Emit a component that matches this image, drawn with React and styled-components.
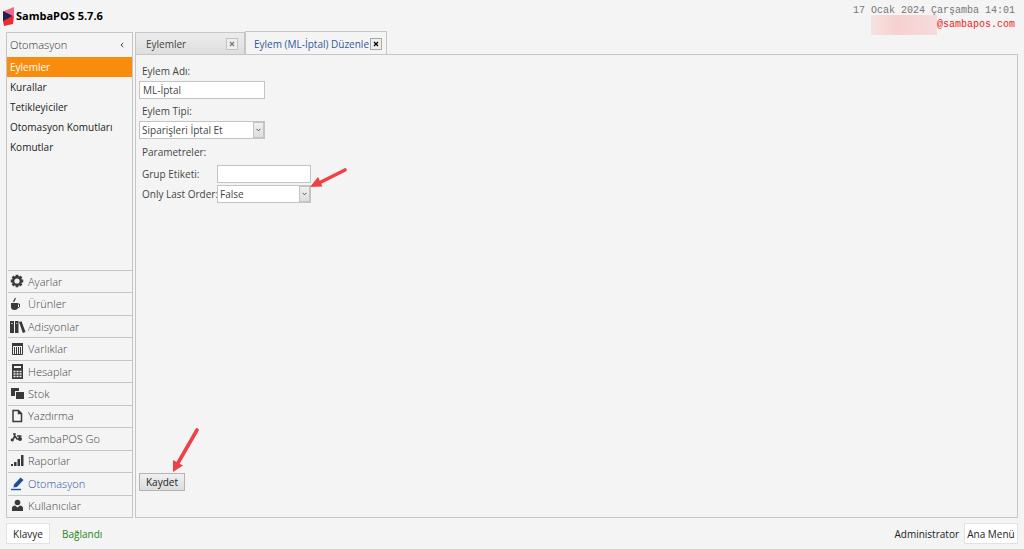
import { useState } from "react";
import styled, { createGlobalStyle } from "styled-components";

const GlobalStyle = createGlobalStyle`
  * {
    box-sizing: border-box;
  }

  body {
    margin: 0;
    background: #f4f4f4;
    color: #222;
    font-family: "Open Sans", "Noto Sans", sans-serif;
    font-size: 10px;
    line-height: 14px;
  }

  button, input, select {
    font: inherit;
    color: inherit;
  }
`;

const Page = styled.div`
  display: flex;
  flex-direction: column;
  min-height: 100vh;
  padding: 0 6px;
`;

const Header = styled.header`
  display: flex;
  justify-content: space-between;
  height: 32px;
`;

const Brand = styled.h1`
  display: flex;
  align-items: center;
  gap: 2px;
  margin: 0 0 0 -3px;
  font-size: 11px;
  font-weight: 700;
  color: #000;
`;

const Status = styled.div`
  display: flex;
  flex-direction: column;
  align-items: flex-end;
  padding: 4px 3px 0 0;
  font-family: "Liberation Mono", monospace;
  font-size: 10px;
  color: #777;
`;

const Account = styled.div`
  display: flex;
  color: #f02020;
`;

const HiddenName = styled.span`
  width: 66px;
  height: 20px;
  margin-top: -3px;
  background: linear-gradient(90deg, #f6e2e2, #f7d0d0 40%, #f6dcdc);
`;

const Main = styled.div`
  display: flex;
  flex: 1;
  gap: 2px;
`;

const Sidebar = styled.aside`
  display: flex;
  flex-direction: column;
  width: 127px;
  border: 1px solid #c6c6c6;
`;

const SidebarTitle = styled.div`
  display: flex;
  align-items: center;
  justify-content: space-between;
  height: 24px;
  padding: 0 8px 0 3px;
  font-size: 11px;
  font-weight: 300;
  color: #333;
`;

const CollapseButton = styled.button`
  display: flex;
  padding: 0;
  border: none;
  background: none;
  cursor: pointer;
`;

const Menu = styled.nav`
  display: flex;
  flex-direction: column;
`;

const MenuItem = styled.button`
  height: 20px;
  padding: 0 3px;
  border: none;
  background: ${(props) => (props.$active ? "#f88c0c" : "transparent")};
  color: ${(props) => (props.$active ? "#fff" : "#222")};
  text-align: left;
  cursor: pointer;
`;

const Modules = styled.nav`
  display: flex;
  flex-direction: column;
  height: 247px;
  margin-top: auto;
  padding-left: 1px;
`;

const Module = styled.button`
  display: flex;
  flex: 1;
  align-items: center;
  gap: 4px;
  padding: 0 2px;
  border: none;
  border-top: 1px solid #c6c6c6;
  background: none;
  font-size: 11px;
  font-weight: 300;
  color: ${(props) => (props.$active ? "#2c50a8" : "#444")};
  text-align: left;
  cursor: pointer;

  svg {
    width: 14px;
    height: 16px;
    overflow: visible;
    color: ${(props) => (props.$active ? "#1f4f9c" : "#3a3a3a")};
  }
`;

const Workspace = styled.main`
  display: flex;
  flex: 1;
  flex-direction: column;
`;

const Tabs = styled.div`
  display: flex;
  align-items: flex-end;
  height: 23px;
  margin-top: -1px;
`;

const Tab = styled.div`
  display: flex;
  align-items: center;
  justify-content: space-between;
  width: ${(props) => (props.$active ? "142px" : "110px")};
  height: ${(props) => (props.$active ? "24px" : "22px")};
  margin-bottom: ${(props) => (props.$active ? "-1px" : "0")};
  padding: ${(props) => (props.$active ? "0 4px 0 8px" : "0 6px 0 10px")};
  border: 1px solid #c6c6c6;
  border-bottom: none;
  background: ${(props) =>
    props.$active ? "#f4f4f4" : "linear-gradient(#ececec, #dedede)"};
  color: ${(props) => (props.$active ? "#31589c" : "#444")};
`;

const TabLabel = styled.button`
  padding: 0;
  border: none;
  background: none;
  white-space: nowrap;
  cursor: pointer;
`;

const TabClose = styled.button`
  display: flex;
  flex-shrink: 0;
  align-items: center;
  justify-content: center;
  width: 12px;
  height: 12px;
  padding: 0;
  border: 1px solid ${(props) => (props.$active ? "#aaa" : "#c4c4c4")};
  background: #eee;
  color: ${(props) => (props.$active ? "#000" : "#777")};
  cursor: pointer;
`;

const Panel = styled.form`
  display: flex;
  flex: 1;
  flex-direction: column;
  align-items: flex-start;
  padding: 6px 3px 26px;
  border: 1px solid #c6c6c6;
  color: #444;
`;

const Label = styled.label`
  height: 20px;
  padding: 0 3px;
  line-height: 20px;
  white-space: nowrap;
`;

const Caption = styled.div`
  height: 20px;
  margin-top: 1px;
  padding: 0 3px;
  line-height: 20px;
`;

const TextBox = styled.input`
  width: ${(props) => (props.$narrow ? "94px" : "126px")};
  height: 18px;
  padding: 0 3px;
  border: 1px solid #c4c4c4;
  background: #fff;
  outline: none;
`;

const Field = styled.div`
  display: flex;
  flex-direction: column;
  margin-bottom: 2px;
`;

const SelectBox = styled.div`
  position: relative;
  width: ${(props) => (props.$narrow ? "94px" : "126px")};
  height: 18px;
`;

const Select = styled.select`
  width: 100%;
  height: 100%;
  padding: 0 14px 0 2px;
  border: 1px solid #c4c4c4;
  border-radius: 0;
  background: #fff;
  appearance: none;
  outline: none;
`;

const SelectArrow = styled.span`
  position: absolute;
  top: 1px;
  right: 1px;
  bottom: 1px;
  display: flex;
  align-items: center;
  justify-content: center;
  width: 11px;
  border: 1px solid #c4c4c4;
  background: linear-gradient(#f0f0f0, #dedede);
  pointer-events: none;
`;

const Parameters = styled.div`
  display: grid;
  grid-template-columns: 78px auto;
  align-items: center;
  margin-top: 2px;
`;

const SaveArea = styled.div`
  position: relative;
  margin-top: auto;
`;

const SaveButton = styled.button`
  width: 46px;
  height: 18px;
  padding: 0;
  border: 1px solid #b4b4b4;
  background: linear-gradient(#f0f0f0, #dcdcdc);
  color: #222;
  cursor: pointer;
`;

const Pointer = styled.svg`
  position: absolute;
  left: ${(props) => props.$left};
  bottom: ${(props) => props.$bottom};
  color: #ee4145;
  pointer-events: none;
`;

const Footer = styled.footer`
  display: flex;
  align-items: center;
  height: 31px;
`;

const FooterButton = styled.button`
  height: 21px;
  padding: 0;
  width: ${(props) => (props.$wide ? "54px" : "44px")};
  border: 1px solid #e2e2e2;
  background: #fff;
  cursor: pointer;
`;

const Connection = styled.span`
  margin-left: 12px;
  color: #1b871b;
`;

const User = styled.span`
  margin: 0 5px 0 auto;
`;

const Logo = () => (
  <svg width="11" height="19" viewBox="0 0 11 19">
    <path d="M1 4L11 0v9L0 7z" fill="#ee6a8c" />
    <path d="M0 4l10 5L0 15z" fill="#25204f" />
    <path d="M0 14L11 8.5l-1 8.500L1 19z" fill="#ee2b31" />
  </svg>
);

const Chevron = () => (
  <svg width="5" height="4" viewBox="0 0 5 4">
    <path d="M.5 .8l2 2 2-2" fill="none" stroke="#555" />
  </svg>
);

const Cross = () => (
  <svg width="6" height="6" viewBox="0 0 6 6">
    <path d="M1 1l4 4M5 1L1 5" stroke="currentColor" strokeWidth="1.3" />
  </svg>
);

const icons = {
  gear: (
    <>
      <circle cx="7" cy="7" r="3.8" fill="none" stroke="currentColor" strokeWidth="2.4" />
      <path
        d="M7 .8v2M7 11.2v2M.8 7h2M11.2 7h2M2.6 2.6L4 4M10 10l1.4 1.4M2.6 11.4L4 10M10 4l1.4-1.4"
        stroke="currentColor"
        strokeWidth="2.8"
      />
    </>
  ),
  cup: (
    <>
      <path d="M1 7h7v4q0 3-3.5 3T1 11z" fill="currentColor" />
      <path d="M8 8h1.5v3L7.5 12" fill="none" stroke="currentColor" />
      <path d="M4 6c-1-2 2-2 1-4" fill="none" stroke="currentColor" strokeWidth="1.2" />
    </>
  ),
  books: (
    <>
      <path d="M0 2h4v12H0zM5 2h3.5v12H5zM9 3l2.5-.8L15.5 13l-2.7 1z" fill="currentColor" />
      <path d="M1 4.5h2M6 4.5h1.5" stroke="#aaa" />
    </>
  ),
  table: (
    <>
      <path d="M2 2h11v3H2z" fill="currentColor" />
      <path
        d="M2.5 5v8.5h10V5M4.5 6v7M6.5 6v7M8.5 6v7M10.5 6v7"
        fill="none"
        stroke="currentColor"
      />
    </>
  ),
  calculator: (
    <>
      <path d="M2 0h11v15H2z" fill="currentColor" />
      <path d="M4 2h7v2H4z" fill="#f4f4f4" />
      <path
        d="M3.500 7.500h2M6.500 7.500h2M9.500 7.500h2M3.500 10h2M6.500 10h2M9.500 10h2M3.500 12.500h2M6.500 12.500h2M9.500 12.500h2"
        stroke="#f4f4f4"
        strokeWidth="1.4"
      />
    </>
  ),
  stock: (
    <path d="M1 2h8v3H5v5H1zM6 6h8v7H6z" fill="currentColor" />
  ),
  page: (
    <path
      d="M3 2.5h5.5l3 3v8H3zM8.5 2.5v3h3"
      fill="none"
      stroke="currentColor"
      strokeWidth="1.5"
    />
  ),
  scooter: (
    <>
      <path
        d="M3 3h2L3.500 8M5 5l2 3h2l1-3M7 5h4.500"
        fill="none"
        stroke="currentColor"
        strokeWidth="1.4"
      />
      <circle cx="2.3" cy="8.8" r="1.6" fill="currentColor" />
      <circle cx="10" cy="8" r="2" fill="currentColor" />
    </>
  ),
  bars: (
    <path d="M1 11h2v2H1zM4 9h2.5v4H4zM7.5 6H10v7H7.5zM11 2h2.5v11H11z" fill="currentColor" />
  ),
  pen: (
    <>
      <path d="M10.5 1.500l3 2.500L7 11l-3.500.5L4 8.500z" fill="currentColor" />
      <path d="M1 13.5h10" stroke="currentColor" strokeWidth="1.4" />
    </>
  ),
  user: (
    <>
      <circle cx="7.500" cy="4.500" r="2.8" fill="currentColor" />
      <path d="M2 13v-3q0-2 3-2.500l2.500 2L10 7.500q3 .5 3 2.5v3z" fill="currentColor" />
    </>
  ),
};

const menuItems = [
  "Eylemler",
  "Kurallar",
  "Tetikleyiciler",
  "Otomasyon Komutları",
  "Komutlar",
];

const modules = [
  { name: "Ayarlar", icon: "gear" },
  { name: "Ürünler", icon: "cup" },
  { name: "Adisyonlar", icon: "books" },
  { name: "Varlıklar", icon: "table" },
  { name: "Hesaplar", icon: "calculator" },
  { name: "Stok", icon: "stock" },
  { name: "Yazdırma", icon: "page" },
  { name: "SambaPOS Go", icon: "scooter" },
  { name: "Raporlar", icon: "bars" },
  { name: "Otomasyon", icon: "pen" },
  { name: "Kullanıcılar", icon: "user" },
];

const App = () => {
  const [menu, setMenu] = useState("Eylemler");
  const [module, setModule] = useState("Otomasyon");
  const [name, setName] = useState("ML-İptal");
  const [tag, setTag] = useState("");

  return (
    <>
      <GlobalStyle />
      <Page>
        <Header>
          <Brand>
            <Logo /> SambaPOS 5.7.6
          </Brand>
          <Status>
            <span>17 Ocak 2024 Çarşamba 14:01</span>
            <Account>
              <HiddenName />
              @sambapos.com
            </Account>
          </Status>
        </Header>

        <Main>
          <Sidebar>
            <SidebarTitle>
              Otomasyon
              <CollapseButton type="button" aria-label="Daralt">
                <svg width="4" height="6" viewBox="0 0 4 6">
                  <path d="M3.3 .8L1 3l2.3 2.2" fill="none" stroke="#444" />
                </svg>
              </CollapseButton>
            </SidebarTitle>
            <Menu>
              {menuItems.map((item) => (
                <MenuItem
                  key={item}
                  type="button"
                  $active={item === menu}
                  onClick={() => setMenu(item)}
                >
                  {item}
                </MenuItem>
              ))}
            </Menu>
            <Modules>
              {modules.map((item) => (
                <Module
                  key={item.name}
                  type="button"
                  $active={item.name === module}
                  onClick={() => setModule(item.name)}
                >
                  <svg viewBox="0 0 14 16">{icons[item.icon]}</svg>
                  {item.name}
                </Module>
              ))}
            </Modules>
          </Sidebar>

          <Workspace>
            <Tabs>
              <Tab>
                <TabLabel type="button">Eylemler</TabLabel>
                <TabClose type="button" aria-label="Kapat">
                  <Cross />
                </TabClose>
              </Tab>
              <Tab $active>
                <TabLabel type="button">Eylem (ML-İptal) Düzenle</TabLabel>
                <TabClose type="button" aria-label="Kapat" $active>
                  <Cross />
                </TabClose>
              </Tab>
            </Tabs>
            <Panel onSubmit={(e) => e.preventDefault()}>
              <Field>
                <Label htmlFor="name">Eylem Adı:</Label>
                <TextBox
                  id="name"
                  value={name}
                  onChange={(e) => setName(e.target.value)}
                />
              </Field>
              <Field>
                <Label htmlFor="type">Eylem Tipi:</Label>
                <SelectBox>
                  <Select id="type">
                    <option>Siparişleri İptal Et</option>
                  </Select>
                  <SelectArrow>
                    <Chevron />
                  </SelectArrow>
                </SelectBox>
              </Field>
              <Caption>Parametreler:</Caption>
              <Parameters>
                <Label htmlFor="tag">Grup Etiketi:</Label>
                <TextBox
                  id="tag"
                  $narrow
                  value={tag}
                  onChange={(e) => setTag(e.target.value)}
                />
                <Label htmlFor="last">Only Last Order:</Label>
                <SelectBox $narrow>
                  <Select id="last">
                    <option>False</option>
                    <option>True</option>
                  </Select>
                  <SelectArrow>
                    <Chevron />
                  </SelectArrow>
                  <Pointer $left="93px" $bottom="14px" width="38" height="22" viewBox="0 0 38 22">
                    <path d="M35 3L9 16" stroke="currentColor" strokeWidth="3.6" strokeLinecap="round" />
                    <path d="M0 20L8 10l4.5 9.5z" fill="currentColor" />
                  </Pointer>
                </SelectBox>
              </Parameters>
              <SaveArea>
                <SaveButton type="submit">Kaydet</SaveButton>
                <Pointer $left="33px" $bottom="18px" width="28" height="46" viewBox="0 0 28 46">
                  <path d="M25 3L6 36" stroke="currentColor" strokeWidth="3.6" strokeLinecap="round" />
                  <path d="M1 45V33l10 5.5z" fill="currentColor" />
                </Pointer>
              </SaveArea>
            </Panel>
          </Workspace>
        </Main>

        <Footer>
          <FooterButton type="button">Klavye</FooterButton>
          <Connection>Bağlandı</Connection>
          <User>Administrator</User>
          <FooterButton type="button" $wide>
            Ana Menü
          </FooterButton>
        </Footer>
      </Page>
    </>
  );
};

export default App;
